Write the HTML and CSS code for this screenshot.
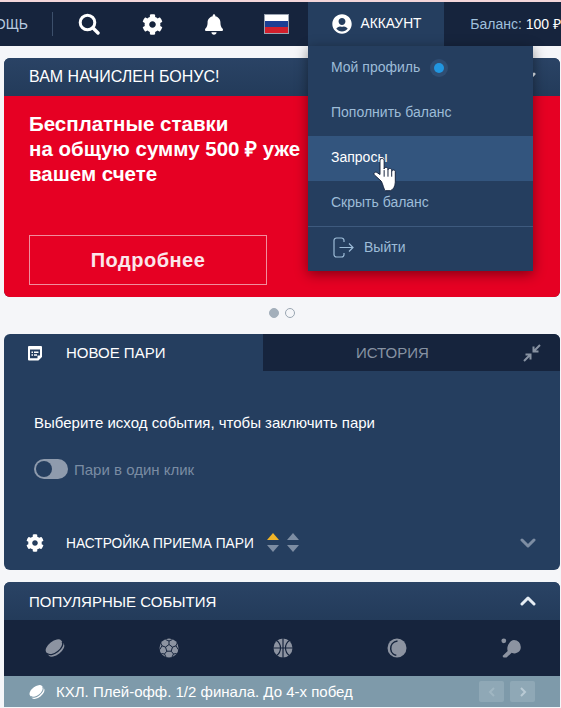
FILE: index.html
```html
<!DOCTYPE html>
<html lang="ru">
<head>
  <meta charset="UTF-8" />
  <meta name="viewport" content="width=device-width, initial-scale=1.0" />
  <title>Аккаунт</title>
  <link rel="stylesheet" href="styles.css">
</head>
<body>

<svg class="defs" width="0" height="0">
  <symbol id="cog" viewBox="0 0 512 512"><path d="M487.4 315.7l-42.6-24.6c4.3-23.2 4.3-47 0-70.2l42.6-24.6c4.9-2.8 7.1-8.6 5.5-14-11.1-35.6-30-67.8-54.7-94.6-3.8-4.1-10-5.1-14.8-2.3L380.8 110c-17.9-15.4-38.5-27.3-60.8-35.1V25.8c0-5.6-3.9-10.5-9.4-11.7-36.7-8.2-74.3-7.8-109.2 0-5.5 1.2-9.4 6.1-9.4 11.7V75c-22.2 7.9-42.8 19.8-60.8 35.1L88.7 85.5c-4.9-2.8-11-1.9-14.8 2.3-24.7 26.7-43.6 58.9-54.7 94.6-1.7 5.4.6 11.2 5.5 14L67.3 221c-4.3 23.2-4.3 47 0 70.2l-42.6 24.6c-4.9 2.8-7.1 8.6-5.5 14 11.1 35.6 30 67.8 54.7 94.6 3.8 4.1 10 5.1 14.8 2.3l42.6-24.6c17.9 15.4 38.5 27.3 60.8 35.1v49.2c0 5.6 3.9 10.5 9.4 11.7 36.7 8.2 74.3 7.8 109.2 0 5.5-1.2 9.4-6.1 9.4-11.7v-49.2c22.2-7.9 42.8-19.8 60.8-35.1l42.6 24.6c4.9 2.8 11 1.9 14.8-2.3 24.7-26.7 43.6-58.9 54.7-94.6 1.5-5.5-.7-11.3-5.6-14.1zM256 336c-44.1 0-80-35.9-80-80s35.9-80 80-80 80 35.9 80 80-35.9 80-80 80z" fill="currentColor"/></symbol>
  <symbol id="chevron" viewBox="0 0 16 10"><path d="M2 2l6 6 6-6" fill="none" stroke="currentColor" stroke-width="3" stroke-linecap="round" stroke-linejoin="round"/></symbol>
  <symbol id="puck" viewBox="0 0 20 20"><g transform="rotate(-38 10 10)"><path fill="currentColor" d="M0.500 8a9.500 5 0 0 1 19 0v4a9.500 5 0 0 1-19 0z"/><path class="puck-line" d="M0.500 9.500a9.500 5 0 0 0 19 0"/></g></symbol>
  <symbol id="arrows" viewBox="0 0 14 22"><path d="M7 1l6 7H1z" fill="currentColor"/><path d="M1 13h12l-6 7z" fill="#7d8da3"/></symbol>
</svg>

<div class="topline"></div>

<header class="topbar">
  <div class="help"><span>ПОМОЩЬ</span></div>
  <div class="tools">
    <svg class="tool-search" width="22" height="22" viewBox="0 0 22 22"><circle cx="9.500" cy="9.500" r="7.300" fill="none" stroke="#fff" stroke-width="3"/><path d="M15 15l5 5" stroke="#fff" stroke-width="3.400" stroke-linecap="round"/></svg>
    <svg class="tool-cog" width="21" height="21"><use href="#cog"/></svg>
    <svg class="tool-bell" width="18" height="21" viewBox="0 0 448 512"><path fill="#fff" d="M224 512c35.32 0 63.97-28.65 63.97-64H160.03c0 35.35 28.65 64 63.97 64zm215.39-149.71c-19.32-20.76-55.47-51.99-55.47-154.29 0-77.7-54.48-139.9-127.94-155.16V32c0-17.67-14.32-32-31.98-32s-31.98 14.33-31.98 32v20.84C118.56 68.1 64.08 130.3 64.08 208c0 102.3-36.15 133.53-55.47 154.29-6 6.45-8.66 14.16-8.61 21.71.11 16.4 12.98 32 32.1 32h383.8c19.12 0 32-15.6 32.1-32 .05-7.55-2.61-15.27-8.61-21.71z"/></svg>
    <div class="flag"><i class="flag-w"></i><i class="flag-b"></i><i class="flag-r"></i></div>
  </div>
  <div class="account">
    <svg width="20" height="20" viewBox="0 0 496 512"><path fill="#fff" d="M248 8C111 8 0 119 0 256s111 248 248 248 248-111 248-248S385 8 248 8zm0 96c48.6 0 88 39.4 88 88s-39.4 88-88 88-88-39.4-88-88 39.4-88 88-88zm0 344c-58.7 0-111.3-26.6-146.5-68.2 18.8-35.4 55.6-59.8 98.5-59.8 2.4 0 4.8.4 7.1 1.1 13 4.2 26.6 6.9 40.9 6.9 14.3 0 28-2.7 40.9-6.9 2.3-.7 4.7-1.1 7.1-1.1 42.9 0 79.7 24.4 98.5 59.8C359.3 421.4 306.7 448 248 448z"/></svg>
    <span>АККАУНТ</span>
  </div>
  <div class="balance">Баланс: <b>100 ₽</b></div>
</header>

<nav class="menu">
  <a class="menu-row">Мой профиль <i class="dot"></i></a>
  <a class="menu-row">Пополнить баланс</a>
  <a class="menu-row active">Запросы</a>
  <a class="menu-row">Скрыть баланс</a>
  <a class="menu-row logout">
    <svg width="21" height="21" viewBox="0 0 21 21" fill="none" stroke="#9dbcd8" stroke-width="1.200"><path d="M11 5V3.500A2.500 2.500 0 0 0 8.500 1H3.500A2.500 2.500 0 0 0 1 3.500v14A2.500 2.500 0 0 0 3.500 20h5a2.500 2.500 0 0 0 2.500-2.500V16"/><path d="M6.500 10.500H20M16 6.500l4 4-4 4"/></svg>
    Выйти
  </a>
</nav>

<svg class="cursor" width="30" height="35" viewBox="0 0 27 32">
  <path d="M9 22L3 16.500c-1.500-1.500.5-3.500 2.300-2.300L8 16V3.500c0-2.800 3.800-2.800 3.800 0V11c0-2 3.500-2 3.500 0v1c0-2 3.400-2 3.400 0v1.200c0-1.800 3.300-1.800 3.300 0V23c0 4-2 7-4.500 7.800H13c-1.500-.5-2.500-7-4-8.800z" fill="#fff" stroke="#16243d" stroke-width=".9"/>
  <path d="M11.800 12v6M15.300 12v6M18.700 13v5" stroke="#16243d" stroke-width=".9" fill="none"/>
</svg>

<main class="content">

  <section class="card">
    <div class="card-head card-head-big">
      <span>ВАМ НАЧИСЛЕН БОНУС!</span>
      <svg class="chevron-light" width="16" height="10"><use href="#chevron"/></svg>
    </div>
    <div class="promo">
      <h2>Бесплатные ставки<br>на общую сумму 500 ₽ уже<br>вашем счете</h2>
      <a class="promo-btn">Подробнее</a>
    </div>
  </section>

  <div class="dots"><i class="on"></i><i></i></div>

  <section class="card">
    <div class="tabs">
      <div class="tab">
        <svg width="16" height="16" viewBox="0 0 16 16"><path fill="#fff" fill-rule="evenodd" d="M2 1h12a1 1 0 0 1 1 1v9.500a1 1 0 0 1-.3.700l-3 3a1 1 0 0 1-.7.300H2a1 1 0 0 1-1-1V2a1 1 0 0 1 1-1zM3 4.500v8.800h7.500v-2.800h2.500V4.500z"/><path fill="#fff" d="M4.500 6.500h1.500V8H4.500zM7 6.500h4.500V8H7zM4.500 9.300h1.500v1.500H4.500zM7 9.300h3v1.500H7z"/></svg>
        <span>НОВОЕ ПАРИ</span>
      </div>
      <div class="tab tab-off">
        <span>ИСТОРИЯ</span>
        <svg width="18" height="18" viewBox="0 0 18 18" fill="none" stroke="#8792a2" stroke-width="2"><path d="M17 1l-6 6M10.500 2.500v5h5M1 17l6-6M2.500 10.500h5v5"/></svg>
      </div>
    </div>
    <div class="slip">
      <p class="slip-hint">Выберите исход события, чтобы заключить пари</p>
      <div class="oneclick">
        <span class="switch"><i></i></span>
        <span>Пари в один клик</span>
      </div>
      <div class="settings">
        <svg class="settings-cog" width="18" height="18"><use href="#cog"/></svg>
        <span>НАСТРОЙКА ПРИЕМА ПАРИ</span>
        <svg class="sort sort-on" width="14" height="22"><use href="#arrows"/></svg>
        <svg class="sort" width="14" height="22"><use href="#arrows"/></svg>
        <svg class="chevron-dim" width="16" height="10"><use href="#chevron"/></svg>
      </div>
    </div>
  </section>

  <section class="card popular">
    <div class="card-head">
      <span>ПОПУЛЯРНЫЕ СОБЫТИЯ</span>
      <svg class="chevron-light" width="16" height="10" viewBox="0 0 16 10"><path d="M2 8l6-6 6 6" fill="none" stroke="currentColor" stroke-width="3" stroke-linecap="round" stroke-linejoin="round"/></svg>
    </div>
    <div class="sports">
      <svg width="20" height="20"><use href="#puck"/></svg>
      <svg width="20" height="20" viewBox="0 0 20 20"><circle cx="10" cy="10" r="9.500" fill="#8c93a1"/><path fill="none" stroke="#16243d" stroke-width="1" d="M10 6.500l3.500 2.600-1.300 4.100H7.800L6.500 9.100zM10 6.500V3M6.500 9.100L3 7.800M13.500 9.100L17 7.800M7.800 13.200L5.500 16M12.200 13.200L14.500 16M6.500 1.500L10 3l3.500-1.500M3 7.800L1.500 4.500M3 7.800L.8 11.500M17 7.800l1.500-3.300M17 7.800l2.200 3.700M5.500 16l-3-.5M5.500 16l1.500 3M14.500 16l3-.5M14.500 16L13 19"/></svg>
      <svg width="20" height="20" viewBox="0 0 20 20"><circle cx="10" cy="10" r="9.500" fill="#8c93a1"/><path fill="none" stroke="#16243d" stroke-width="1.200" d="M10 0v20M0 10h20M3.500 2.500c3 2 4 5 4 7.500s-1 5.500-4 7.500M16.500 2.500c-3 2-4 5-4 7.500s1 5.500 4 7.500"/></svg>
      <svg width="20" height="20" viewBox="0 0 20 20"><circle cx="10" cy="10" r="9.500" fill="#8c93a1"/><path fill="none" stroke="#16243d" stroke-width="1.500" d="M10.500 3C6 3.500 3.500 7 3.700 11c.1 2 1 3.800 2.500 5 .9.700 2 1.200 3.100 1.300"/></svg>
      <svg width="20" height="20" viewBox="0 0 20 20"><circle cx="2.800" cy="2.800" r="2.400" fill="#8c93a1"/><path fill="#8c93a1" d="M13 2a7 7 0 0 1 6.800 7c0 2-.8 3.500-1.800 4.600-2 2-5 2.200-7.300 1.200L5.500 19.500H2.500L1.500 18l5.200-5c-.8-2.300-.4-5.200 1.500-7.700C9.200 3.500 11 2 13 2z"/></svg>
    </div>
    <div class="league">
      <svg width="16" height="16"><use href="#puck"/></svg>
      <span>КХЛ. Плей-офф. 1/2 финала. До 4-х побед</span>
      <div class="league-nav">
        <a class="league-btn"><svg width="8" height="12" viewBox="0 0 8 12"><path d="M6 2L2 6l4 4" fill="none" stroke="#a0b6c2" stroke-width="2"/></svg></a>
        <a class="league-btn"><svg width="8" height="12" viewBox="0 0 8 12"><path d="M2 2l4 4-4 4" fill="none" stroke="#b9cad4" stroke-width="2"/></svg></a>
      </div>
    </div>
  </section>

</main>

</body>
</html>
```

FILE: styles.css
```css
* { box-sizing: border-box; }
html, body { margin: 0; height: 708px; overflow: hidden; }
body { position: relative; font-family: "Liberation Sans", Arial, sans-serif; font-size: 14px; background: #f5f6f9; color: #fff; }
.defs { position: absolute; }
svg { display: block; flex: none; }
i { display: block; }

.topline { height: 2px; background: #f3d6da; }
.topbar { display: flex; align-items: center; height: 44px; background: #16243d; white-space: nowrap; }
.help { display: flex; justify-content: flex-end; width: 53px; height: 24px; padding-right: 24px; border-right: 1px solid #3c4f6b; overflow: hidden; line-height: 24px; color: #b9cbe0; }
.help span { flex: none; }
.tools { display: flex; align-items: center; width: 255px; }
.tool-search { margin-left: 25px; }
.tool-cog { margin-left: 42px; color: #fff; }
.tool-bell { margin-left: 42px; }
.flag { display: flex; flex-direction: column; width: 25px; height: 20px; margin-left: 41px; border: 1px solid #9aa3b1; }
.flag i { flex: 1; }
.flag-w { background: #fff; }
.flag-b { background: #1c3f94; }
.flag-r { background: #d21f2c; }
.account { display: flex; align-items: center; gap: 9px; width: 137px; height: 100%; padding-left: 24px; background: #253e5f; font-size: 13.800px; }
.account span { margin-top: -2px; }
.balance { margin: -2px 0 0 26px; color: #9fc0dc; }
.balance b { font-weight: normal; color: #fff; }

.menu { position: absolute; left: 308px; top: 46px; width: 225px; background: #253e5f; box-shadow: 0 3px 12px rgba(0,0,0,.45); z-index: 5; }
.menu-row { display: flex; align-items: center; height: 45px; padding: 0 0 4px 23px; color: #9dbcd8; }
.menu-row.active { background: #33557e; color: #fff; }
.menu-row.logout { gap: 10px; padding-left: 25px; border-top: 1px solid #3e5a7e; }
.dot { width: 10px; height: 10px; margin: 2px 0 0 14px; border-radius: 50%; background: #2196e0; box-shadow: 0 0 0 4px #2f4d72; }
.cursor { position: absolute; left: 371px; top: 157px; z-index: 6; }

.content { padding: 12px 1px 0 4px; }
.card { border-radius: 6px; overflow: hidden; background: #253e5f; }
.card-head { display: flex; align-items: center; justify-content: space-between; height: 38px; padding: 0 24px 0 25px; background: linear-gradient(#2a4365, #233b5a); font-size: 15px; }
.card-head-big { font-size: 16px; }
.chevron-light { color: #e6edf4; }
.promo { height: 201px; padding: 15px 25px 0; background: #e60023; }
.promo h2 { margin: 0; font-size: 20.500px; line-height: 25px; font-weight: bold; }
.promo-btn { display: flex; align-items: center; justify-content: center; width: 238px; height: 50px; margin-top: 49px; border: 1px solid #f18d9d; font-size: 20px; font-weight: bold; letter-spacing: .5px; color: #fbe6ea; }

.dots { display: flex; justify-content: center; gap: 6px; height: 37px; padding-top: 11px; }
.dots i { width: 10px; height: 10px; border-radius: 50%; border: 1px solid #9aa6b2; }
.dots i.on { background: #a3afbb; border-color: #a3afbb; }

.tabs { display: flex; height: 37px; font-size: 15px; }
.tab { display: flex; align-items: center; gap: 23px; width: 259px; padding-left: 23px; }
.tab-off { flex: 1; justify-content: space-between; padding: 0 19px 0 93px; background: #16243d; color: #8792a2; }
.slip { height: 199px; padding-top: 44px; }
.slip-hint { margin: 0 0 0 30px; font-size: 15px; line-height: 16px; }
.oneclick { display: flex; align-items: center; gap: 6px; margin: 28px 0 0 30px; font-size: 15px; color: #7a8ca3; }
.switch { width: 34px; height: 20px; padding: 2px; border-radius: 10px; background: #8f9bad; }
.switch i { width: 16px; height: 16px; border-radius: 50%; background: #253e5f; }
.settings { display: flex; align-items: center; margin: 53px 24px 0 22px; height: 22px; font-size: 13.750px; }
.settings-cog { margin-right: 22px; color: #fff; }
.sort { margin-left: 6px; color: #7d8da3; }
.sort-on { margin-left: 12px; color: #f0b429; }
.chevron-dim { margin-left: auto; color: #7d8da3; }

.popular { margin-top: 12px; border-radius: 6px 6px 0 0; }
.sports { --puck-line: #16243d; display: flex; align-items: center; gap: 94px; height: 56px; padding-left: 41px; background: #16243d; color: #8c93a1; }
.puck-line { fill: none; stroke: var(--puck-line); stroke-width: 1.300; }
.league { --puck-line: #7e9aaa; display: flex; align-items: center; height: 31px; padding: 0 25px; background: #7e9aaa; color: #fff; }
.league span { margin-left: 11px; font-size: 15px; }
.league-nav { display: flex; gap: 6px; margin-left: auto; }
.league-btn { display: flex; align-items: center; justify-content: center; width: 25px; height: 21px; background: #8fa8b6; border-radius: 2px; }
```
